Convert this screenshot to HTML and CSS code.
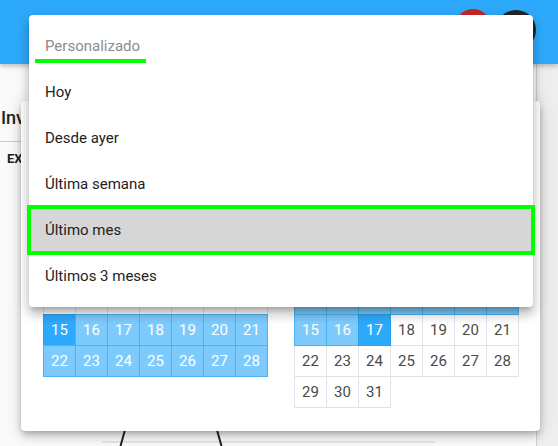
FILE: index.html
```html
<!DOCTYPE html>
<html lang="es">
<head>
<meta charset="utf-8">
<title>Inventario</title>
<link rel="stylesheet" href="styles.css">
</head>
<body>
<header class="appbar">
  <span class="avatar avatar-red"></span>
  <span class="avatar avatar-dark"></span>
</header>

<main class="page">
  <h1 class="page-title">Inventario</h1>
  <nav class="tabs"><span class="tab">EXPORTAR</span></nav>
  <svg class="chart" width="536" height="16" viewBox="0 0 536 16">
    <line x1="102" y1="12" x2="435" y2="12" stroke="#d2d2d2" stroke-width="1"/>
    <line x1="125" y1="0" x2="120.5" y2="16" stroke="#222" stroke-width="2"/>
    <line x1="217" y1="0" x2="221.5" y2="16" stroke="#222" stroke-width="2"/>
  </svg>
</main>

<section class="dialog">
  <div class="range-field">Personalizado</div>
  <div class="calendars">
    <div class="calendar">
      <div class="month">febrero 2021</div>
      <div class="weekdays"><span>L</span><span>M</span><span>X</span><span>J</span><span>V</span><span>S</span><span>D</span></div>
      <div class="days">
        <span class="day">1</span><span class="day">2</span><span class="day">3</span><span class="day">4</span><span class="day">5</span><span class="day">6</span><span class="day">7</span>
        <span class="day">8</span><span class="day">9</span><span class="day">10</span><span class="day">11</span><span class="day">12</span><span class="day">13</span><span class="day">14</span>
        <span class="day edge">15</span><span class="day in-range">16</span><span class="day in-range">17</span><span class="day in-range">18</span><span class="day in-range">19</span><span class="day in-range">20</span><span class="day in-range">21</span>
        <span class="day in-range">22</span><span class="day in-range">23</span><span class="day in-range">24</span><span class="day in-range">25</span><span class="day in-range">26</span><span class="day in-range">27</span><span class="day in-range">28</span>
      </div>
    </div>
    <div class="calendar">
      <div class="month">marzo 2021</div>
      <div class="weekdays"><span>L</span><span>M</span><span>X</span><span>J</span><span>V</span><span>S</span><span>D</span></div>
      <div class="days">
        <span class="day in-range">1</span><span class="day in-range">2</span><span class="day in-range">3</span><span class="day in-range">4</span><span class="day in-range">5</span><span class="day in-range">6</span><span class="day in-range">7</span>
        <span class="day in-range">8</span><span class="day in-range">9</span><span class="day in-range">10</span><span class="day in-range">11</span><span class="day in-range">12</span><span class="day in-range">13</span><span class="day in-range">14</span>
        <span class="day in-range">15</span><span class="day in-range">16</span><span class="day edge">17</span><span class="day">18</span><span class="day">19</span><span class="day">20</span><span class="day">21</span>
        <span class="day">22</span><span class="day">23</span><span class="day">24</span><span class="day">25</span><span class="day">26</span><span class="day">27</span><span class="day">28</span>
        <span class="day">29</span><span class="day">30</span><span class="day">31</span>
      </div>
    </div>
  </div>
</section>

<ul class="menu">
  <li class="menu-item menu-item-muted">Personalizado</li>
  <li class="menu-item">Hoy</li>
  <li class="menu-item">Desde ayer</li>
  <li class="menu-item">Última semana</li>
  <li class="menu-item menu-item-selected">Último mes</li>
  <li class="menu-item">Últimos 3 meses</li>
</ul>
</body>
</html>
```

FILE: styles.css
```css
html, body {
  margin: 0;
  padding: 0;
}

body {
  width: 558px;
  height: 446px;
  overflow: hidden;
  background: #eeeeee;
  font-family: Roboto, "Liberation Sans", sans-serif;
  position: relative;
}

.appbar {
  position: relative;
  z-index: 2;
  height: 64px;
  background: #2eaafc;
  box-shadow: 0 2px 5px rgba(0, 0, 0, 0.25);
  display: flex;
  justify-content: flex-end;
  align-items: flex-start;
  gap: 5px;
  padding: 9px 22px 0 0;
  box-sizing: border-box;
}

.avatar {
  display: block;
  border-radius: 50%;
}

.avatar-red {
  width: 36px;
  height: 36px;
  background: #c62828;
}

.avatar-dark {
  width: 40px;
  height: 40px;
  margin-top: 1px;
  background: #262626;
}

.page {
  width: 536px;
  height: 382px;
  background: #fafafa;
  border-right: 1px solid #cfcfcf;
  display: flex;
  flex-direction: column;
}

.page-title {
  margin: 43px 0 0 0;
  padding: 0 0 12px 1px;
  font-size: 18px;
  line-height: 22px;
  font-weight: 500;
  color: #222;
  border-bottom: 1px solid #cfcfcf;
}

.tabs {
  padding: 9px 0 0 7px;
}

.tab {
  display: block;
  font-size: 13px;
  line-height: 16px;
  font-weight: 700;
  color: #222;
}

.chart {
  display: block;
  margin-top: 263px;
}

.dialog {
  position: absolute;
  left: 21px;
  top: 101px;
  width: 519px;
  height: 330px;
  box-sizing: border-box;
  padding: 22px 21px 0 22px;
  background: #fff;
  border-radius: 4px;
  box-shadow: 0 3px 5px -1px rgba(0, 0, 0, 0.2), 0 6px 10px 0 rgba(0, 0, 0, 0.14), 0 1px 18px 0 rgba(0, 0, 0, 0.12);
  z-index: 3;
}

.range-field {
  height: 40px;
  margin-bottom: 29px;
  font-size: 15px;
  line-height: 40px;
  color: #333;
  border-bottom: 1px solid #ccc;
  box-sizing: border-box;
}

.calendars {
  display: flex;
  gap: 26px;
}

.calendar {
  width: 225px;
}

.month {
  height: 32px;
  line-height: 32px;
  text-align: center;
  font-size: 15px;
  color: #333;
}

.weekdays {
  display: grid;
  grid-template-columns: repeat(7, 32px);
  height: 28px;
  line-height: 28px;
  font-size: 13px;
  color: #777;
  text-align: center;
}

.days {
  display: grid;
  grid-template-columns: repeat(7, 32px);
  grid-auto-rows: 31px;
  width: 225px;
}

.day {
  width: 33px;
  height: 32px;
  box-sizing: border-box;
  border: 1px solid #e0e3e6;
  display: flex;
  align-items: center;
  justify-content: center;
  font-size: 15px;
  color: #4a4a4a;
  background: #fff;
}

.day.in-range {
  position: relative;
  z-index: 1;
  background: #7dcbfd;
  border-color: #4bb3f3;
  color: #fff;
}

.day.edge {
  position: relative;
  z-index: 1;
  background: #2eaafc;
  border-color: #2c9fec;
  color: #fff;
}

.menu {
  position: absolute;
  left: 29px;
  top: 15px;
  width: 504px;
  margin: 0;
  padding: 8px 0;
  list-style: none;
  background: #fff;
  border-radius: 4px;
  box-shadow: 0 5px 5px -3px rgba(0, 0, 0, 0.2), 0 8px 10px 1px rgba(0, 0, 0, 0.14), 0 3px 14px 2px rgba(0, 0, 0, 0.12);
  z-index: 5;
}

.menu-item {
  height: 46px;
  display: flex;
  align-items: center;
  padding: 0 16px;
  font-size: 15px;
  color: #222;
}

.menu-item-muted {
  position: relative;
  color: #8c8c8c;
}

.menu-item-muted::after {
  content: "";
  position: absolute;
  left: 6px;
  top: 36px;
  width: 111px;
  height: 4px;
  background: #00ff00;
}

.menu-item-selected {
  background: #d6d6d6;
  outline: 4px solid #00ff00;
  outline-offset: -2px;
}
```
